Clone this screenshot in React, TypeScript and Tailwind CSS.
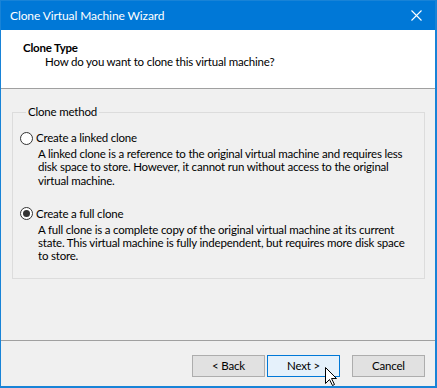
import React from 'react';

const font = { fontFamily: 'Lato, "Noto Sans", sans-serif' };

const Radio: React.FC<{ checked?: boolean }> = ({ checked }) => (
  <span className="relative flex h-[13px] w-[13px] shrink-0 items-center justify-center rounded-full border border-[#333333] bg-white">
    {checked && <span className="h-[7px] w-[7px] rounded-full bg-[#333333]" />}
  </span>
);

const Option: React.FC<{ label: string; lines: string[]; checked?: boolean; className?: string }> = ({ label, lines, checked, className }) => (
  <div className={className}>
    <div className="flex h-[16px] items-center gap-[3px]">
      <Radio checked={checked} />
      <span className="leading-[16px]">{label}</span>
    </div>
    <div className="mt-[1px] pl-[18px] leading-[13.3px] whitespace-nowrap">
      {lines.map((l) => (
        <div key={l}>{l}</div>
      ))}
    </div>
  </div>
);

const Button: React.FC<{ children: React.ReactNode; primary?: boolean }> = ({ children, primary }) => (
  <button
    className={
      'flex h-[22px] w-[73px] items-center justify-center border text-black ' +
      (primary ? 'border-[#0078d7] bg-[#e5f1fb]' : 'border-[#adadad] bg-[#e1e1e1]')
    }
  >
    {children}
  </button>
);

export default function App() {
  return (
    <div className="h-[388px] w-[437px] bg-white text-[11.5px] tracking-[-0.2px] text-black" style={font}>
      <div className="relative flex h-[388px] w-[437px] flex-col border-t border-r-2 border-b-2 border-l border-[#1883d7] bg-[#f0f0f0]">
        {/* Title bar */}
        <div className="flex h-[29px] shrink-0 items-center justify-between bg-[#0078d7] pl-[9px] pr-[13px] text-white">
          <span className="text-[12px] tracking-[-0.1px]">Clone Virtual Machine Wizard</span>
          <svg width="11" height="11" viewBox="0 0 11 11" className="mb-[1px]">
            <path d="M0.5 0.5 L10.5 10.5 M10.5 0.5 L0.5 10.5" stroke="white" strokeWidth="1.1" />
          </svg>
        </div>

        {/* Header */}
        <div className="h-[59px] shrink-0 border-b border-[#a0a0a0] bg-white pt-[11px] pl-[22px]">
          <div className="font-bold leading-[14px]">Clone Type</div>
          <div className="pl-[22px] leading-[14px]">How do you want to clone this virtual machine?</div>
        </div>

        {/* Body */}
        <div className="flex-1 px-[11px] pt-[15px]">
          <fieldset className="h-[175px] w-[413px] overflow-hidden border border-[#dcdcdc] pl-[7px]">
            <legend className="ml-[6px] px-[2px] leading-[16px]">Clone method</legend>
            <Option
              className="mt-[10px]"
              label="Create a linked clone"
              lines={[
                'A linked clone is a reference to the original virtual machine and requires less',
                'disk space to store. However, it cannot run without access to the original',
                'virtual machine.',
              ]}
            />
            <Option
              className="mt-[19px]"
              checked
              label="Create a full clone"
              lines={[
                'A full clone is a complete copy of the original virtual machine at its current',
                'state. This virtual machine is fully independent, but requires more disk space',
                'to store.',
              ]}
            />
          </fieldset>
        </div>

        {/* Footer */}
        <div className="h-[46px] shrink-0 border-t border-[#a0a0a0] pt-[14px] pr-[10px]">
          <div className="flex justify-end">
            <Button>&lt; Back</Button>
            <div className="ml-[2px]">
              <Button primary>Next &gt;</Button>
            </div>
            <div className="ml-[12px]">
              <Button>Cancel</Button>
            </div>
          </div>
        </div>

        {/* Mouse cursor */}
        <svg width="13" height="20" viewBox="0 0 13 20" className="absolute left-[324px] top-[366px]">
          <path d="M0.5 0.5 L0.5 16.5 L4.5 12.5 L7.5 18.5 L9.5 17.5 L6.5 11.5 L11.5 11.5 Z" fill="white" stroke="black" strokeWidth="1" strokeLinejoin="miter" />
        </svg>
      </div>
    </div>
  );
}
